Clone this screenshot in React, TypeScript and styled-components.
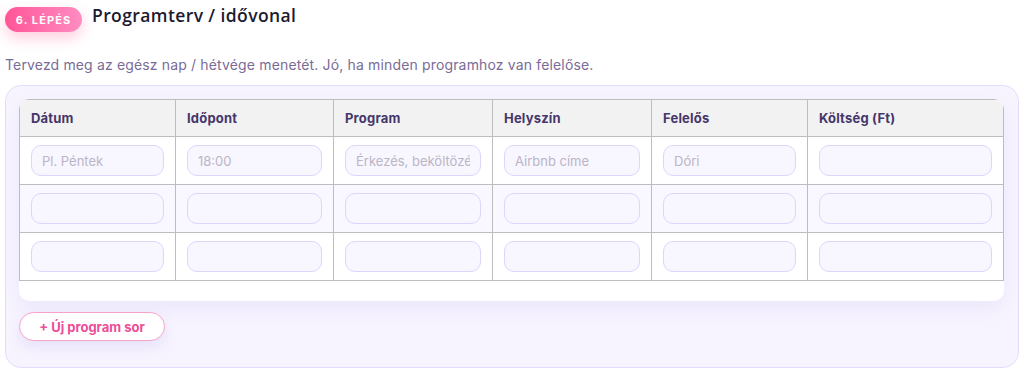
import React from "react";
import styled, { createGlobalStyle } from "styled-components";

const GlobalStyle = createGlobalStyle`
  body {
    margin: 0;
    background: #ffffff;
    font-family: "Inter", "Noto Sans", sans-serif;
  }
  * { box-sizing: border-box; }
`;

const columns = ["Dátum", "Időpont", "Program", "Helyszín", "Felelős", "Költség (Ft)"];
const widths = [156, 158, 159, 159, 156, 196];

const rows = [
  ["Pl. Péntek", "18:00", "Érkezés, beköltözés", "Airbnb címe", "Dóri", ""],
  ["", "", "", "", "", ""],
  ["", "", "", "", "", ""],
];

export default function App() {
  return (
    <Page>
      <GlobalStyle />
      <Header>
        <Badge>6. LÉPÉS</Badge>
        <Title>Programterv / idővonal</Title>
      </Header>
      <Description>
        Tervezd meg az egész nap / hétvége menetét. Jó, ha minden programhoz van felelőse.
      </Description>
      <Panel>
        <TableCard>
          <Table>
            <colgroup>
              {widths.map((w, i) => (
                <col key={i} style={{ width: w }} />
              ))}
            </colgroup>
            <thead>
              <tr>
                {columns.map((c) => (
                  <Th key={c}>{c}</Th>
                ))}
              </tr>
            </thead>
            <tbody>
              {rows.map((r, ri) => (
                <Tr key={ri} $striped={ri % 2 === 1}>
                  {r.map((p, ci) => (
                    <Td key={ci}>
                      <Input placeholder={p} />
                    </Td>
                  ))}
                </Tr>
              ))}
            </tbody>
          </Table>
        </TableCard>
        <AddButton>+ Új program sor</AddButton>
      </Panel>
    </Page>
  );
}

const Page = styled.div`
  padding: 5px 3px 0 5px;
`;

const Header = styled.div`
  display: flex;
  align-items: center;
  gap: 10px;
  height: 27px;
  margin-top: 1px;
`;

const Badge = styled.span`
  display: inline-flex;
  align-items: center;
  justify-content: center;
  width: 77px;
  height: 25px;
  border-radius: 999px;
  background: linear-gradient(90deg, #ff5596 0%, #ff8cc2 100%);
  color: #ffffff;
  font-size: 11px;
  font-weight: 700;
  letter-spacing: 1.1px;
  box-shadow: 0 6px 14px rgba(255, 90, 150, 0.3);
`;

const Title = styled.h2`
  margin: 0;
  font-family: "Open Sans", "Noto Sans", sans-serif;
  font-size: 17.5px;
  font-weight: 600;
  letter-spacing: 0.4px;
  color: #1c1a2e;
  position: relative;
  top: -5px;
`;

const Description = styled.p`
  margin: 23px 0 0;
  font-size: 14px;
  letter-spacing: 0.15px;
  color: #7a6c98;
  line-height: 18px;
`;

const Panel = styled.div`
  margin-top: 11px;
  width: 1014px;
  height: 283px;
  padding: 13px 13px;
  background: #f7f4ff;
  border: 1px solid #e4dcfc;
  border-radius: 16px;
`;

const TableCard = styled.div`
  background: #ffffff;
  border-radius: 10px;
  padding-bottom: 20px;
  box-shadow: 0 8px 18px rgba(160, 140, 220, 0.12);
  overflow: hidden;
  width: 985px;
`;

const Table = styled.table`
  border-collapse: collapse;
  width: 984px;
  table-layout: fixed;
`;

const Th = styled.th`
  height: 37px;
  background: #f2f2f2;
  border: 1px solid #bdbdbd;
  text-align: left;
  padding: 0 11px;
  font-size: 13px;
  font-weight: 700;
  letter-spacing: 0.2px;
  color: #45366b;
`;

const Tr = styled.tr<{ $striped: boolean }>`
  background: ${(p) => (p.$striped ? "#f9f7ff" : "#ffffff")};
`;

const Td = styled.td`
  height: 48px;
  border: 1px solid #bdbdbd;
  padding: 0 11px;
`;

const Input = styled.input`
  display: block;
  width: 100%;
  height: 31px;
  border: 1px solid #ddd5fb;
  border-radius: 10px;
  background: #f8f6ff;
  padding: 0 10px;
  font-family: "Inter", "Noto Sans", sans-serif;
  font-size: 13px;
  color: #333;
  outline: none;

  &::placeholder {
    color: #bab5c6;
  }
`;

const AddButton = styled.button`
  margin-top: 11px;
  width: 146px;
  height: 29px;
  border-radius: 999px;
  border: 1px solid #f8a2c9;
  background: #ffffff;
  color: #ee4d97;
  font-family: "Inter", "Noto Sans", sans-serif;
  font-size: 13px;
  font-weight: 700;
  box-shadow: 0 6px 14px rgba(160, 140, 220, 0.18);
  cursor: pointer;
`;
